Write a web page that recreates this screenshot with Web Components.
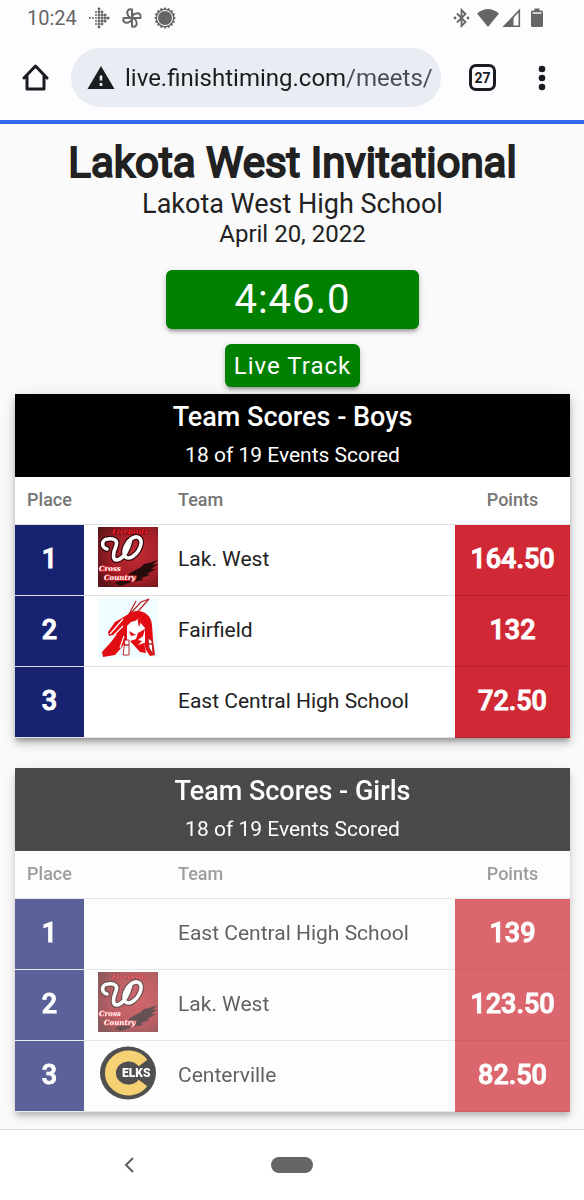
<!DOCTYPE html>
<html lang="en">
<head>
<meta charset="utf-8">
<meta name="viewport" content="width=device-width, initial-scale=1">
<title>Lakota West Invitational</title>
<style>
  body { margin: 0; background: #fafafa; color: #212121; font-family: Roboto, "Liberation Sans", sans-serif; }
</style>
</head>
<body>
<phone-screen>
  <status-bar slot="top" time="10:24"></status-bar>
  <browser-bar slot="top" url="live.finishtiming.com/meets/" tabs="27"></browser-bar>
  <meet-header>
    <span slot="name">Lakota West Invitational</span>
    <span slot="venue">Lakota West High School</span>
    <span slot="date">April 20, 2022</span>
  </meet-header>
  <race-actions>
    <span slot="clock">4:46.0</span>
    <span slot="track">Live Track</span>
  </race-actions>
  <score-card teams="Lak. West|164.50|firebirds;Fairfield|132|fairfield;East Central High School|72.50|">
    <span slot="title">Team Scores - Boys</span>
    <span slot="status">18 of 19 Events Scored</span>
  </score-card>
  <score-card faded teams="East Central High School|139|;Lak. West|123.50|firebirds;Centerville|82.50|elks">
    <span slot="title">Team Scores - Girls</span>
    <span slot="status">18 of 19 Events Scored</span>
  </score-card>
  <nav-bar slot="bottom"></nav-bar>
</phone-screen>

<script>
function define(name, render) {
  customElements.define(name, class extends HTMLElement {
    connectedCallback() {
      if (this.shadowRoot) return;
      this.attachShadow({ mode: "open" }).innerHTML = render(this);
    }
  });
}

define("phone-screen", () => `
<style>
  :host { display: flex; flex-direction: column; min-height: 100vh; }
  main { flex: 1; padding: 15px 14px 17px 15px; }
  main ::slotted(score-card) { margin-bottom: 30px; }
  main ::slotted(score-card[faded]) { margin-bottom: 0; }
</style>
<slot name="top"></slot>
<main><slot></slot></main>
<slot name="bottom"></slot>`);

const dotGrid = () => {
  const rows = [[-9, [0]], [-6, [-3, 0, 3]], [-3, [-6, -3, 0, 3, 6]], [0, [-9, -6, -3, 0, 3, 6, 9]],
                [3, [-6, -3, 0, 3, 6]], [6, [-3, 0, 3]], [9, [0]]];
  return rows.map(([y, xs]) => xs.filter(x => x > -6 || y === 0)
    .map(x => `<circle cx="${11 + x}" cy="${11 + y}" r="${x > 3 ? 1.6 : x > -3 ? 1.4 : 1}"/>`).join("")).join("");
};
const sunSpikes = () => {
  const pts = [];
  for (let i = 0; i < 32; i++) {
    const r = i % 2 ? 9 : 11, a = i * Math.PI / 16;
    pts.push((11 + r * Math.cos(a)).toFixed(1) + "," + (11 + r * Math.sin(a)).toFixed(1));
  }
  return pts.join(" ");
};
const fanBlades = () => [0, 90, 180, 270].map(a =>
  `<path d="M11 11V2.500C7.500 1.500 5.500 4 6.500 7C7.200 9.500 9 11 11 11Z" transform="rotate(${a} 11 11)"/>`).join("");

define("status-bar", el => `
<style>
  :host { display: flex; align-items: center; justify-content: space-between; height: 35px; padding: 0 41px 0 27px;
          background: #fdfdff; color: #666; font-size: 20px; line-height: 24px; }
  div { display: flex; align-items: center; }
  .left { gap: 11px; }
  svg { display: block; }
  .wifi { margin-left: 7px; }
  .cell { margin-left: 3px; }
  .batt { margin-left: 10px; }
</style>
<div class="left">
  <span>${el.getAttribute("time")}</span>
  <svg width="22" height="22" fill="#666" aria-hidden="true">${dotGrid()}</svg>
  <svg width="22" height="22" fill="none" stroke="#666" stroke-width="2" stroke-linejoin="round" aria-hidden="true">${fanBlades()}</svg>
  <svg width="22" height="22" aria-hidden="true"><polygon points="${sunSpikes()}" fill="#666"/><circle cx="11" cy="11" r="7.500" fill="#666" stroke="#fdfdff" stroke-width="1"/></svg>
</div>
<div>
  <svg width="17" height="20" fill="none" stroke="#666" stroke-width="1.800" aria-hidden="true"><path d="M4 5.500L12.500 14L8.500 18V2L12.500 6L4 14.500"/><circle cx="2" cy="10" r="1.400" fill="#666" stroke="none"/><circle cx="15" cy="10" r="1.400" fill="#666" stroke="none"/></svg>
  <svg class="wifi" width="22" height="20" fill="#666" aria-hidden="true"><path d="M0 5.500Q11-3.500 22 5.500L11 19Z"/></svg>
  <svg class="cell" width="19" height="20" aria-hidden="true"><path d="M17.300 2.500V18.200H2.500Z" fill="none" stroke="#666" stroke-width="1.600"/><path d="M11.500 8V19H0.500Z" fill="#666"/></svg>
  <svg class="batt" width="12" height="20" fill="#666" aria-hidden="true"><path d="M3.500 0.500H8.500V2.500H10.500Q12 2.500 12 4V17.500Q12 19 10.500 19H1.500Q0 19 0 17.500V4Q0 2.500 1.500 2.500H3.500Z"/><path d="M1.500 5H10.500" stroke="#fdfdff" stroke-width="1.400"/></svg>
</div>`);

define("browser-bar", el => `
<style>
  :host { display: flex; align-items: center; height: 85px; padding: 0 29px 0 22px; background: #fdfdff;
          border-bottom: 4px solid #3367f0; }
  button { border: 0; padding: 0; background: none; color: #1b1c1f; display: grid; place-items: center; font: inherit; }
  svg { display: block; }
  .pill { flex: 1; min-width: 0; display: flex; align-items: center; gap: 10px; height: 59px; box-sizing: border-box;
          margin: 0 28px 0 22px; padding: 0 6px 0 16px; border-radius: 30px; background: #e7edf3; }
  .pill svg { flex: none; }
  input { flex: 1; min-width: 0; height: 36px; border: 0; padding: 0; outline: 0; color: #1b1c1f;
          font: 24px/36px Roboto, "Liberation Sans", sans-serif;
          background: linear-gradient(90deg, #1b1c1f 221px, #484b50 221px) text; -webkit-text-fill-color: transparent; }
  .tabs { width: 27px; height: 27px; box-sizing: border-box; border: 3px solid #1b1c1f; border-radius: 7px;
          font-size: 14px; line-height: 20px; font-weight: 700; }
  .menu { width: 26px; margin-left: 33px; }
</style>
<button aria-label="Home"><svg width="27" height="27" fill="none" stroke="#1b1c1f" stroke-width="3" stroke-linejoin="round" stroke-linecap="round"><path d="M2 14L13.500 2L25 14M5 12V25H22V12"/></svg></button>
<div class="pill">
  <svg width="28" height="24" aria-hidden="true"><path d="M14 0L27.500 23H0.500Z" fill="#1b1c1f"/><path d="M14 9.500V14.500M14 17V20" stroke="#e7edf3" stroke-width="2.600"/></svg>
  <input type="text" aria-label="Address" value="${el.getAttribute("url")}">
</div>
<button class="tabs" aria-label="Open tabs">${el.getAttribute("tabs")}</button>
<button class="menu" aria-label="Menu"><svg width="8" height="26" fill="#1b1c1f"><circle cx="4" cy="4" r="3.300"/><circle cx="4" cy="13" r="3.300"/><circle cx="4" cy="22" r="3.300"/></svg></button>`);

define("meet-header", () => `
<style>
  :host { display: block; text-align: center; }
  h1 { margin: 0 0 2px; font-size: 42px; line-height: 48px; font-weight: 400; -webkit-text-stroke: 2px currentColor; }
  p { margin: 0; line-height: 30px; }
  .venue { font-size: 27px; }
  .date { font-size: 24px; }
</style>
<h1><slot name="name"></slot></h1>
<p class="venue"><slot name="venue"></slot></p>
<p class="date"><slot name="date"></slot></p>`);

define("race-actions", () => `
<style>
  :host { display: flex; flex-direction: column; align-items: center; gap: 15px; margin: 21px 0 7px; }
  button { border: 0; border-radius: 6px; background: #008000; color: #fff; font-family: inherit; white-space: nowrap;
           box-shadow: 0 4px 3px -2px rgba(0,0,0,.2), 0 3px 4px rgba(0,0,0,.14), 0 2px 8px rgba(0,0,0,.12); }
  .clock { min-width: 253px; height: 59px; padding: 0 23px; font-size: 40px; letter-spacing: 1px; }
  .track { height: 43px; padding: 0 9px; font-size: 24px; letter-spacing: 1px; }
</style>
<button class="clock"><slot name="clock"></slot></button>
<button class="track"><slot name="track"></slot></button>`);

const CURL = "M9 22C3 21 3 12 10 12C17 11 20 14 18 19C15 26 14 33 19 33C26 32 31 21 33 12C29 15 24 23 27 29C30 35 41 27 43 17C44 10 38 8 33 12";
const LOGOS = {
  firebirds: ["Firebirds Cross Country", `
    <defs><radialGradient id="g" cx=".65" cy=".45" r=".75"><stop offset="0" stop-color="#c22a33"/><stop offset=".6" stop-color="#a01f28"/><stop offset="1" stop-color="#5a1417"/></radialGradient></defs>
    <rect width="60" height="60" fill="url(#g)"/>
    <path d="M17 56L28 50L32 46L43 40L46 37L51 36L60 33L54 38L60 37L53 42L58 42L49 47L52 48L43 51L45 53L34 55L22 59Z" fill="#260b0d"/>
    <text x="32" y="7" text-anchor="middle" font-size="7" font-weight="700" font-style="italic" font-family="DejaVu Serif, serif" fill="#ff2028" stroke="#5a0c10" stroke-width="1" paint-order="stroke">Firebirds</text>
    <g fill="none" stroke-linecap="round" stroke-linejoin="round">
      <path d="${CURL}" stroke="#35090c" stroke-width="6"/>
      <path d="${CURL}" stroke="#fff" stroke-width="3.600"/>
    </g>
    <g font-size="7" font-weight="700" font-style="italic" font-family="DejaVu Serif, serif" fill="#fff" stroke="#d3222a" stroke-width="1.600" paint-order="stroke">
      <text x="1" y="44">Cross</text><text x="6" y="53">Country</text>
    </g>`],
  fairfield: ["Fairfield", `
    <rect width="60" height="60" fill="#f0fcff"/>
    <path d="M32 16L43 4L51 1M34 20L51 1M29 20L38 3" fill="none" stroke="#b4282c" stroke-width="1.300"/>
    <path d="M5 59L4 54L13 44L19 36L11 38L10 34L17 24L24 20L32 15C42 10 53 15 54 27L55 42L57 57L52 58L48 52L46 46L47 30L40 22L33 24L29 28V42L24 49L17 57Z" fill="#e10d13"/>
    <path d="M12 36L25 21M16 37L25 28M26 38L22 50" stroke="#fff" stroke-width="1.200"/>
    <path d="M30 28L36 25L40 20L44 27L47 33V44L43 52L34 48L30 41Z" fill="#fff"/>
    <path d="M31 33L38 37L33 38ZM40 35L47 31L45 38L40 42L44 43L40 47L46 45L48 55L42 54L32 43L38 41ZM39 19L41 29L43 24Z" fill="#e10d13"/>
    <path d="M27 42H31V57H25ZM50 40L54 43L55 56L51 50Z" fill="#fff" stroke="#b4282c" stroke-width="1"/>
    <path d="M26 47H31M50 46H55" stroke="#b4282c" stroke-width="1.500"/>`],
  elks: ["Centerville Elks", `
    <ellipse cx="30" cy="30" rx="28" ry="26.500" fill="#080808"/>
    <path d="M45 20A18 17 0 1 0 45 40" fill="none" stroke="#f5c03b" stroke-width="11"/>
    <path d="M52 24H30Q24 30 30 36H52Z" fill="#080808"/>
    <text x="24" y="34" font-size="12" font-weight="900" font-family="Roboto, sans-serif" fill="#fff">ELKS</text>`]
};

define("team-logo", el => {
  const [label, art] = LOGOS[el.getAttribute("name")];
  return `<style>:host { display: block; } svg { display: block; }</style>
  <svg width="60" height="60" viewBox="0 0 60 60" role="img" aria-label="${label}">${art}</svg>`;
});

define("score-card", el => {
  const rows = el.getAttribute("teams").split(";").map((entry, i) => {
    const [team, points, logo] = entry.split("|");
    return `<tr><td class="place">${i + 1}</td><td class="logo">${logo ? `<team-logo name="${logo}"></team-logo>` : ""}</td><td class="team">${team}</td><td class="points">${points}</td></tr>`;
  }).join("");
  return `
<style>
  :host { display: block; background: #fff;
          box-shadow: 0 4px 4px -1px rgba(0,0,0,.22), 0 6px 8px rgba(0,0,0,.14), 0 2px 14px rgba(0,0,0,.12); }
  :host([faded]) { opacity: .7; }
  header { background: #000; color: #fff; text-align: center; padding: 5px 0 2px; }
  h2 { margin: 0; font-size: 27px; line-height: 36px; font-weight: 500; }
  p { margin: 0; font-size: 21px; line-height: 40px; }
  table { width: 100%; border-collapse: separate; border-spacing: 0; table-layout: fixed; }
  th, td { box-sizing: border-box; padding: 0 0 2px; border-bottom: 1px solid rgba(0,0,0,.12); }
  th, thead td { height: 48px; font-size: 18px; line-height: 24px; font-weight: 500; color: #757575; }
  tbody td { height: 71px; font-size: 21px; line-height: 28px; }
  .c1 { width: 69px; } .c2 { width: 87px; } .c4 { width: 115px; }
  .team { text-align: left; padding-left: 7px; }
  tbody .place, tbody .points { text-align: center; color: #fff; font-size: 27px; font-weight: 500; -webkit-text-stroke: 1px currentColor; }
  .place { background: #172371; border-bottom-color: #dfe0ea; }
  .points { background: #d02834; }
  .logo { padding: 0 0 7px 14px; }
</style>
<header><h2><slot name="title"></slot></h2><p><slot name="status"></slot></p></header>
<table>
  <colgroup><col class="c1"><col class="c2"><col><col class="c4"></colgroup>
  <thead><tr><th scope="col">Place</th><td></td><th scope="col" class="team">Team</th><th scope="col">Points</th></tr></thead>
  <tbody>${rows}</tbody>
</table>`;
});

define("nav-bar", () => `
<style>
  :host { display: grid; grid-template-columns: 1fr auto 1fr; align-items: center; height: 70px;
          background: #fff; border-top: 1px solid #dcdcdc; }
  button { border: 0; padding: 0; background: none; }
  svg { display: block; }
  .back { justify-self: center; margin-right: 14px; }
  .home { width: 42px; height: 16px; border-radius: 8px; background: #666; }
</style>
<button class="back" aria-label="Back"><svg width="12" height="18" fill="none" stroke="#5f5f5f" stroke-width="2"><path d="M10 2L3 9L10 16"/></svg></button>
<button class="home" aria-label="Home screen"></button>`);
</script>
</body>
</html>
